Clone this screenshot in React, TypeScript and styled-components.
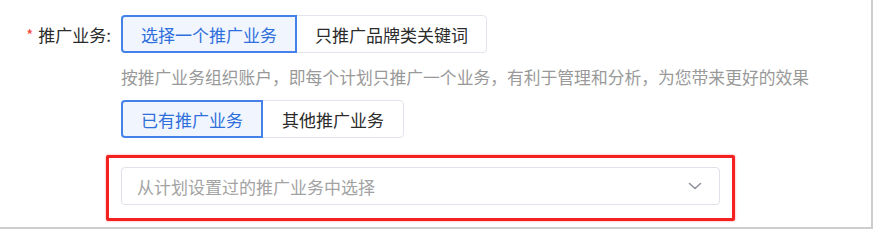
import React from "react";
import styled, { createGlobalStyle } from "styled-components";

const Global = createGlobalStyle`
  html, body { margin: 0; padding: 0; background: #fff; }
  body { font-family: "Noto Sans CJK SC", "Noto Sans", sans-serif; }
  * { box-sizing: border-box; }
`;

const Panel = styled.div`
  width: 873px;
  height: 229px;
  padding-top: 15px;
  border-right: 2px solid #cdcdcd;
  border-bottom: 2px solid #cdcdcd;
  background: #fff;
`;

const FormRow = styled.div`
  display: grid;
  grid-template-columns: 121px 1fr;
`;

const Label = styled.div`
  display: flex;
  justify-content: flex-end;
  align-items: center;
  height: 38px;
  padding-right: 10px;
  font-size: 17px;
  color: #2b2b2b;
  white-space: nowrap;
`;

const Required = styled.span`
  color: #f04134;
  font-size: 15px;
  margin-right: 5px;
`;

const Content = styled.div`
  display: flex;
  flex-direction: column;
  align-items: flex-start;
`;

const Group = styled.div<{ $mt?: number }>`
  display: flex;
  margin-top: ${(p) => p.$mt ?? 0}px;
`;

const SegButton = styled.button<{ $active?: boolean; $w: number }>`
  position: relative;
  height: 38px;
  width: ${(p) => p.$w}px;
  padding: 0;
  font-family: inherit;
  font-size: 17px;
  line-height: 1;
  cursor: pointer;
  color: ${(p) => (p.$active ? "#2f6fdc" : "#2b2b2b")};
  background: ${(p) => (p.$active ? "#f1f6fe" : "#fff")};
  border: ${(p) => (p.$active ? "2px solid #4482ea" : "1px solid #e2e5ec")};
  z-index: ${(p) => (p.$active ? 1 : 0)};
  &:first-child { border-radius: 4px 0 0 4px; }
  &:last-child { border-radius: 0 4px 4px 0; margin-left: -1px; }
`;

const Hint = styled.div`
  margin-top: 12px;
  font-size: 16.8px;
  line-height: 24px;
  color: #999;
  white-space: nowrap;
`;

const Highlight = styled.div`
  margin-top: 17px;
  margin-left: -15px;
  width: 629px;
  height: 66px;
  padding: 9px 12px 0 12px;
  border: 3px solid #f52020;
  border-radius: 2px;
  box-shadow: 0 0 2px rgba(255, 40, 40, 0.6);
`;

const Select = styled.div`
  display: flex;
  align-items: center;
  justify-content: space-between;
  height: 38px;
  width: 599px;
  padding: 0 17px 0 15px;
  border: 1px solid #dfe2e8;
  border-radius: 4px;
  background: #fff;
`;

const Placeholder = styled.span`
  font-size: 17px;
  color: #a3a3a3;
`;

const Chevron = () => (
  <svg width="14" height="8" viewBox="0 0 14 8" fill="none">
    <path d="M1.5 1.5 L7 6.5 L12.5 1.5" stroke="#8d929b" strokeWidth="1.6" strokeLinecap="round" strokeLinejoin="round" />
  </svg>
);

export default function App() {
  return (
    <>
      <Global />
      <Panel>
        <FormRow>
          <Label>
            <Required>*</Required>推广业务:
          </Label>
          <Content>
            <Group>
              <SegButton $active $w={176}>选择一个推广业务</SegButton>
              <SegButton $w={191}>只推广品牌类关键词</SegButton>
            </Group>
            <Hint>按推广业务组织账户，即每个计划只推广一个业务，有利于管理和分析，为您带来更好的效果</Hint>
            <Group $mt={11}>
              <SegButton $active $w={142}>已有推广业务</SegButton>
              <SegButton $w={142}>其他推广业务</SegButton>
            </Group>
            <Highlight>
              <Select>
                <Placeholder>从计划设置过的推广业务中选择</Placeholder>
                <Chevron />
              </Select>
            </Highlight>
          </Content>
        </FormRow>
      </Panel>
    </>
  );
}
